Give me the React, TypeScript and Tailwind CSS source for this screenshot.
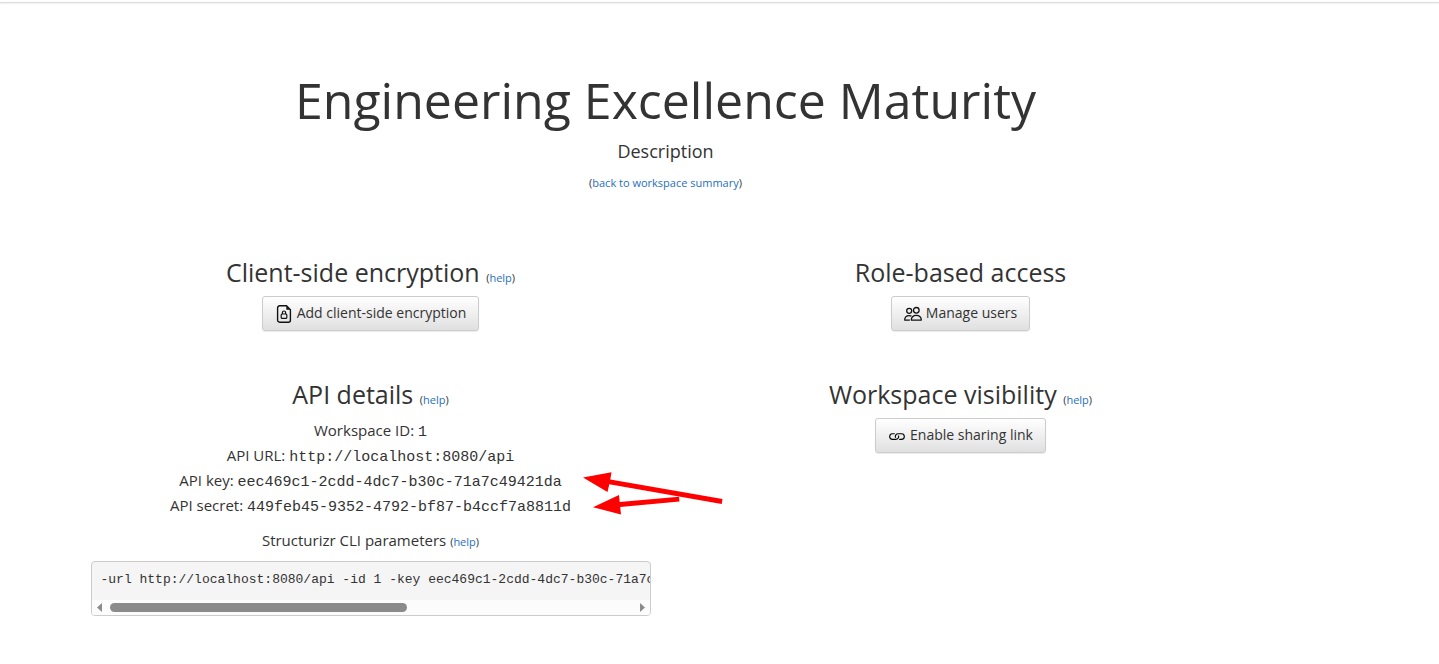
import type { ReactNode } from "react";
import { BsLink } from "react-icons/bs";

const mono = "font-['Liberation_Mono',monospace]";

function Help({ label }: { label: string }) {
  return (
    <small className="text-[11px] leading-none font-normal">
      (<a href="#help" aria-label={label} className="text-[#1f6fbd]">help</a>)
    </small>
  );
}

function Button({ icon, children }: { icon: ReactNode; children: ReactNode }) {
  return (
    <button
      type="button"
      className="inline-flex h-[35px] items-center gap-1 rounded-[3px] border border-[#cccccc] bg-linear-to-b from-white to-[#e0e0e0] px-3 pb-px align-top text-sm text-[#333333] shadow-[0_1px_1px_rgba(0,0,0,0.08)]"
    >
      {icon}
      <span>{children}</span>
    </button>
  );
}

function FileLockIcon() {
  return (
    <svg className="mt-0.5 size-[18px]" viewBox="0 0 18 18" fill="none" stroke="#111" strokeWidth="1.4" aria-hidden="true">
      <path d="M11.5 .8H4.6a2 2 0 0 0-2 2v12.4a2 2 0 0 0 2 2h8.8a2 2 0 0 0 2-2V4.7z" />
      <path d="M11.3 1v3.8h4z" fill="#111" stroke="none" />
      <rect x="6.2" y="9" width="5.6" height="4.4" rx="1" strokeWidth="1.2" />
      <path d="M7.4 9V7.6a1.6 1.6 0 0 1 3.2 0V9" strokeWidth="1.2" />
    </svg>
  );
}

function PeopleIcon() {
  return (
    <svg className="mt-0.5 size-[18px]" viewBox="0 0 18 18" fill="none" stroke="#111" strokeWidth="1.3" aria-hidden="true">
      <circle cx="12.3" cy="5.3" r="2.8" />
      <circle cx="5.2" cy="5.8" r="2.5" />
      <path d="M7.4 15.2c-.3-3 1.8-4.8 4.9-4.8s5.2 1.8 4.9 4.8z" strokeLinejoin="round" />
      <path d="M5.8 15.2H.8c-.3-2.8 1.4-4.6 4.4-4.6 1 0 1.7.2 2.3.5" strokeLinejoin="round" />
    </svg>
  );
}

function Heading({ children }: { children: ReactNode }) {
  return <h2 className="mb-[7px] text-[25px] leading-[34px]">{children}</h2>;
}

function Detail({ label, value }: { label: string; value: string }) {
  return (
    <div>
      {label}: <code className={`leading-none ${mono}`}>{value}</code>
    </div>
  );
}

function Arrows() {
  return (
    <svg className="absolute top-[95px] left-[507px] h-[46px] w-[142px]" viewBox="0 0 142 46" fill="#ff0000" aria-hidden="true">
      <path d="M0 5.500 28.500 .3 27.300 7.600 139.500 27 138.700 32 26.300 12.300 24.500 20z" />
      <path d="M10 35.200 36 23 36.700 30 96 24.700 96.500 29.500 37.200 35 38 42.500z" />
    </svg>
  );
}

export default function App() {
  return (
    <div className="bg-white pr-[108px] font-['Open_Sans',sans-serif] text-[15px] leading-[25px] text-[#333333]">
      <div className="-mr-[108px] h-[3px] border-b border-[#dddddd] shadow-[0_1px_2px_rgba(0,0,0,0.06)]" />
      <main className="mx-auto max-w-[1180px] pt-[63px] text-center">
        <header>
          <h1 className="text-[50px] leading-[68px]">Engineering Excellence Maturity</h1>
          <p className="mt-[5px] text-lg leading-[25px]">Description</p>
          <p className="mt-2 text-[11px] leading-[22px]">
            (<a href="#summary" className="text-[#1f6fbd]">back to workspace summary</a>)
          </p>
        </header>

        <div className="mt-[61px] grid grid-cols-2 gap-y-[46px]">
          <section>
            <Heading>Client-side encryption <Help label="Client-side encryption help" /></Heading>
            <Button icon={<FileLockIcon />}>Add client-side encryption</Button>
          </section>
          <section>
            <Heading>Role-based access</Heading>
            <Button icon={<PeopleIcon />}>Manage users</Button>
          </section>
          <section className="relative px-[15px]">
            <Heading>API details <Help label="API details help" /></Heading>
            <Detail label="Workspace ID" value="1" />
            <Detail label="API URL" value="http://localhost:8080/api" />
            <Detail label="API key" value="eec469c1-2cdd-4dc7-b30c-71a7c49421da" />
            <Detail label="API secret" value="449feb45-9352-4792-bf87-b4ccf7a8811d" />
            <p className="mt-2.5">
              Structurizr CLI parameters <Help label="Structurizr CLI parameters help" />
            </p>
            <div className="mt-2 overflow-hidden rounded-sm border border-[#cccccc] bg-[#f5f5f5] text-left">
              <pre className={`overflow-x-auto px-[9px] pt-2 pb-2.5 text-[13px] leading-5 [scrollbar-width:none] ${mono}`}>
                -url http://localhost:8080/api -id 1 -key eec469c1-2cdd-4dc7-b30c-71a7c49421da -secret 449feb45-9352-4792-bf87-b4ccf7a8811d
              </pre>
              <div className="flex h-[15px] items-center bg-[#fcfcfc] px-[5px]" aria-hidden="true">
                <svg className="h-[9px] w-[5px]" viewBox="0 0 5 9" fill="#8b8b8b"><path d="M5 0v9L0 4.5z" /></svg>
                <div className="mx-2 flex-1">
                  <div className="h-[9px] w-[57%] rounded-full bg-[#8b8b8b]" />
                </div>
                <svg className="h-[9px] w-[5px]" viewBox="0 0 5 9" fill="#8b8b8b"><path d="M0 0v9l5-4.5z" /></svg>
              </div>
            </div>
            <Arrows />
          </section>
          <section>
            <Heading>Workspace visibility <Help label="Workspace visibility help" /></Heading>
            <Button icon={<BsLink className="mt-0.5 size-[18px] text-black" aria-hidden="true" />}>
              Enable sharing link
            </Button>
          </section>
        </div>
      </main>
    </div>
  );
}
